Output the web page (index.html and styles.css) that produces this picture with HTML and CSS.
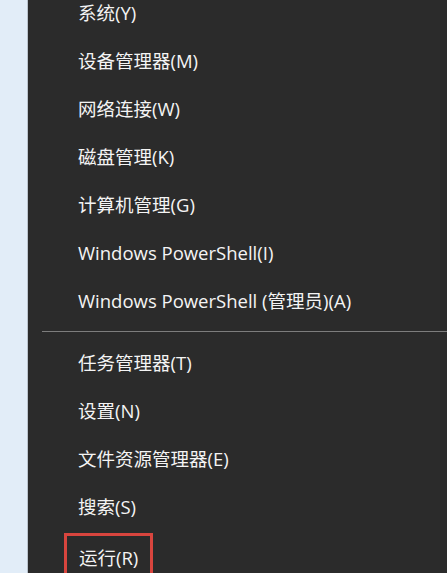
FILE: index.html
```html
<!DOCTYPE html>
<html lang="zh-CN">
<head>
  <meta charset="UTF-8">
  <title>快速链接菜单</title>
  <link rel="stylesheet" href="styles.css">
</head>
<body>

<div class="desktop">
  <div class="sideStrip"></div>

  <ul class="menu">
    <li class="item">系统(Y)</li>
    <li class="item">设备管理器(M)</li>
    <li class="item">网络连接(W)</li>
    <li class="item">磁盘管理(K)</li>
    <li class="item">计算机管理(G)</li>
    <li class="item">Windows PowerShell(I)</li>
    <li class="item">Windows PowerShell (管理员)(A)</li>
    <li class="separator"></li>
    <li class="item">任务管理器(T)</li>
    <li class="item">设置(N)</li>
    <li class="item">文件资源管理器(E)</li>
    <li class="item">搜索(S)</li>
    <li class="item marked"><span class="highlight">运行(R)</span></li>
  </ul>
</div>

</body>
</html>
```

FILE: styles.css
```css
body {
  margin: 0;
  font-family: "Open Sans", "Noto Sans CJK SC", sans-serif;
  overflow: hidden;
}

.desktop {
  display: flex;
  height: 573px;
  background-color: #2b2b2b;
}

.sideStrip {
  width: 27px;
  flex-shrink: 0;
  background-color: #e2edf8;
  border-right: 1px solid #b9c2cc;
}

.menu {
  list-style: none;
  margin: -11px 0 0 0;
  padding: 0 0 0 14px;
  flex: 1;
  color: #f4f4f4;
  font-size: 18.5px;
}

.item {
  height: 48px;
  line-height: 48px;
  padding-left: 36px;
  white-space: nowrap;
}

.separator {
  height: 1px;
  margin: 6px 0 7px 0;
  background-color: #7d7d7d;
}

.marked {
  padding-left: 22px;
}

.highlight {
  display: inline-block;
  height: 44px;
  line-height: 44px;
  padding: 0 12px;
  margin-top: 2px;
  border: 3px solid #d8453e;
  border-bottom: none;
}
```
